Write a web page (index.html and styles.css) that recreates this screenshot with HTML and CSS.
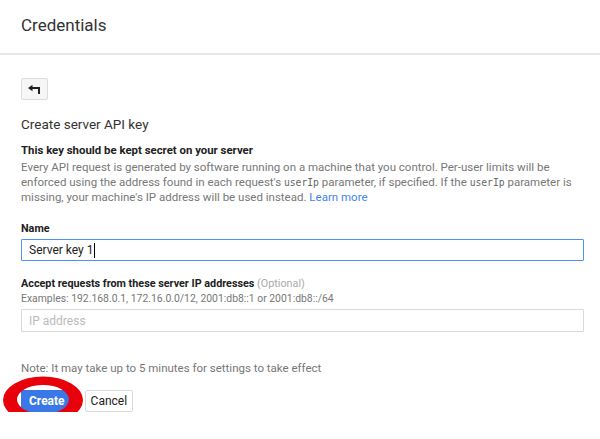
FILE: index.html
```html
<!DOCTYPE html>
<html>
<head>
<meta charset="utf-8">
<link rel="stylesheet" href="styles.css">
</head>
<body>
<header class="top">
  <h1 class="title">Credentials</h1>
</header>
<main class="content">
  <button class="back" aria-label="Back">
    <svg width="13" height="9" viewBox="0 0 13 9"><path d="M0 3 L4.5 -0.2 L4.5 6.2 Z" fill="#212121"/><path d="M4 3 H11 V9" fill="none" stroke="#212121" stroke-width="2"/></svg>
  </button>
  <h2 class="subtitle">Create server API key</h2>
  <p class="strong">This key should be kept secret on your server</p>
  <p class="desc">Every API request is generated by software running on a machine that you control. Per-user limits will be enforced using the address found in each request's <code>userIp</code> parameter, if specified. If the <code>userIp</code> parameter is missing, your machine's IP address will be used instead. <a href="#">Learn more</a></p>

  <label class="label name-label">Name</label>
  <div class="input focused">Server key 1<span class="caret"></span></div>

  <label class="label ip-label">Accept requests from these server IP addresses <span class="opt">(Optional)</span></label>
  <p class="hint">Examples: 192.168.0.1, 172.16.0.0/12, 2001:db8::1 or 2001:db8::/64</p>
  <div class="input placeholder">IP address</div>

  <p class="note">Note: It may take up to 5 minutes for settings to take effect</p>
  <div class="actions">
    <button class="btn primary">Create</button>
    <button class="btn">Cancel</button>
    <svg class="circle" width="90" height="52" viewBox="0 0 90 52"><path fill-rule="evenodd" fill="#e8000b" d="M2 25 A40 23.5 0 1 0 82 25 A40 23.5 0 1 0 2 25 Z M16 24.5 A26 14.5 0 1 0 68 24.5 A26 14.5 0 1 0 16 24.5 Z"/></svg>
  </div>
</main>
</body>
</html>
```
FILE: styles.css
```css
html, body {
  margin: 0;
  padding: 0;
  background: #fff;
}
body {
  font-family: Roboto, "Liberation Sans", Arial, sans-serif;
  color: #212121;
  width: 600px;
}
.top {
  height: 53px;
  border-bottom: 2px solid #e6e6e6;
  display: flex;
  align-items: center;
  padding-left: 21px;
}
.title {
  margin: 0;
  font-size: 17px;
  font-weight: 400;
  color: #333;
  padding-bottom: 4px;
}
.content {
  padding: 23px 16px 0 21px;
}
.back {
  width: 27px;
  height: 22px;
  border: 1px solid #dcdcdc;
  border-radius: 2px;
  background: #f6f6f6;
  display: flex;
  align-items: center;
  justify-content: center;
  padding: 0;
  margin: 0;
}
.subtitle {
  margin: 14px 0 0;
  font-size: 13.5px;
  font-weight: 400;
  line-height: 20px;
  color: #333;
}
.strong {
  margin: 9px 0 0;
  font-size: 11.4px;
  font-weight: 700;
  line-height: 15px;
  color: #212121;
}
.desc {
  margin: 2px 0 0;
  font-size: 11.5px;
  line-height: 15px;
  color: #777;
}
.desc code {
  font-family: "DejaVu Sans Mono", "Liberation Mono", monospace;
  font-size: 9.7px;
  line-height: 1;
  color: #666;
}
.desc a {
  color: #4285f4;
  text-decoration: none;
}
.label {
  display: block;
  font-size: 10.8px;
  font-weight: 700;
  line-height: 15px;
  color: #212121;
}
.name-label {
  margin-top: 16px;
}
.opt {
  font-weight: 400;
  color: #aaa;
}
.input {
  box-sizing: border-box;
  height: 22px;
  border: 1px solid #d9d9d9;
  border-radius: 1px;
  padding: 0 7px;
  font-size: 12px;
  line-height: 20px;
  display: flex;
  align-items: center;
}
.focused {
  margin-top: 3px;
  border-color: #4d90fe;
  color: #212121;
}
.caret {
  display: inline-block;
  width: 1px;
  height: 15px;
  background: #000;
  margin-left: 1px;
}
.ip-label {
  margin-top: 15px;
}
.hint {
  margin: 0;
  font-size: 10.4px;
  line-height: 15px;
  color: #777;
}
.placeholder {
  margin-top: 3px;
  height: 23px;
  color: #bbb;
}
.note {
  margin: 29px 0 0;
  font-size: 11.5px;
  line-height: 15px;
  color: #777;
}
.actions {
  position: relative;
  margin-top: 14px;
  display: flex;
  gap: 12px;
}
.btn {
  height: 22px;
  border: 1px solid #d9d9d9;
  border-radius: 2px;
  background: #fff;
  font-family: Roboto, "Liberation Sans", Arial, sans-serif;
  font-size: 12px;
  color: #212121;
  padding: 0 5px;
  margin: 0;
}
.primary {
  background: #3b78e7;
  border-color: #3b78e7;
  color: #fff;
  font-weight: 700;
  padding: 0 7px;
}
.circle {
  position: absolute;
  left: -20px;
  top: -15px;
}
```
